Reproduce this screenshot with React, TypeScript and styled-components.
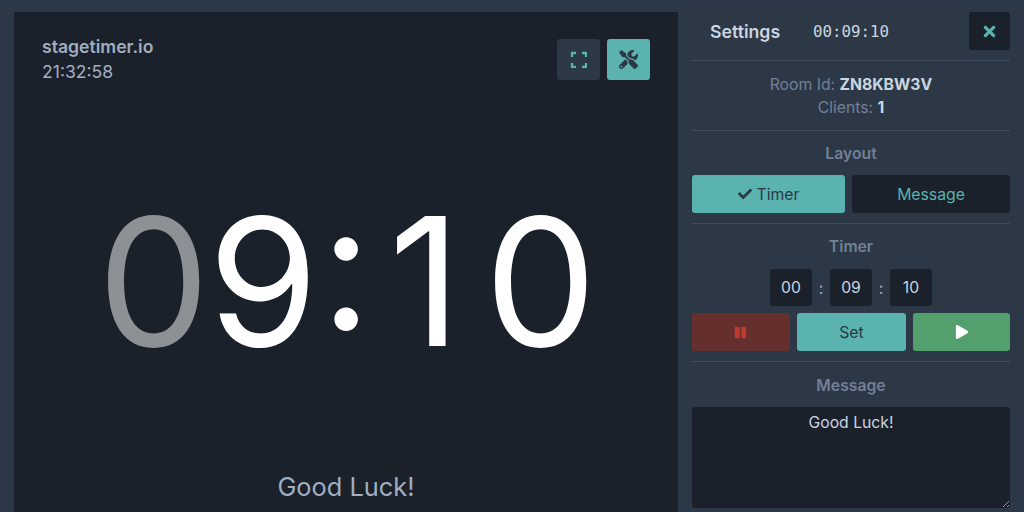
import React from 'react';
import styled, { createGlobalStyle } from 'styled-components';
import { FaCheck, FaPause, FaPlay, FaTimes, FaTools } from 'react-icons/fa';

const GlobalStyle = createGlobalStyle`
    html, body {
        margin: 0;
        height: 100%;
        overflow: hidden;
        background: #2c3846;
    }
    #root {
        height: 100%;
    }
    * {
        box-sizing: border-box;
    }
`;

const teal = '#5ab3ae';
const dark = '#1a212b';
const panel = '#2c3846';

const Page = styled.div`
    display: flex;
    height: 512px;
    padding-top: 10px;
    background: ${panel};
    border-top: 2px solid #28364a;
    font-family: Inter, "Liberation Sans", sans-serif;
`;

const Stage = styled.main`
    width: 664px;
    margin-left: 14px;
    background: ${dark};
    display: flex;
    flex-direction: column;
    flex-shrink: 0;
`;

const StageTop = styled.div`
    width: 100%;
    display: flex;
    justify-content: space-between;
    padding: 22px 28px 0;
`;

const Brand = styled.div`
    color: #a0aec0;
    font-size: 17.6px;
    line-height: 25px;
`;

const BrandName = styled.div`
    font-weight: 600;
`;

const IconButtons = styled.div`
    display: flex;
    gap: 7px;
    margin-top: 5px;
`;

const IconButton = styled.button<{ $active?: boolean }>`
    width: 43px;
    height: 41px;
    border: 0;
    border-radius: 3px;
    padding: 0;
    display: flex;
    align-items: center;
    justify-content: center;
    font-size: 19px;
    background: ${(p) => (p.$active ? teal : panel)};
    color: ${(p) => (p.$active ? panel : teal)};
`;

const Clock = styled.div`
    margin-top: 85px;
    padding-left: 83.5px;
    display: flex;
    align-items: flex-start;
    color: #fff;
    font-size: 178px;
    line-height: 225px;
    white-space: nowrap;
`;

const Digit = styled.span<{ $faded?: boolean }>`
    width: 110.5px;
    text-align: center;
    opacity: ${(p) => (p.$faded ? 0.5 : 1)};
`;

// the colon sits higher than the digits, a shorter line box lifts it
const Colon = styled.span`
    width: 51.5px;
    padding-left: 2px;
    text-align: center;
    line-height: 193px;
`;

const NarrowDigit = styled.span`
    width: 110px;
    margin-right: 4.5px;
    text-align: center;
`;

const StageMessage = styled.div`
    margin-top: 78px;
    color: #a0aec0;
    font-size: 25.4px;
    line-height: 30px;
    text-align: center;
`;

const Sidebar = styled.aside`
    flex: 1;
    padding: 0 14px;
    display: flex;
    flex-direction: column;
`;

const SettingsHead = styled.div`
    display: flex;
    align-items: center;
    height: 38px;
    padding-left: 18px;
`;

const SettingsTitle = styled.div`
    color: #cbd5e0;
    font-size: 17.7px;
    font-weight: 600;
    width: 103px;
`;

const MonoClock = styled.div`
    color: #cbd5e0;
    font-family: "DejaVu Sans Mono", "Liberation Mono", monospace;
    font-size: 15.8px;
    flex: 1;
`;

const CloseButton = styled.button`
    width: 41px;
    height: 38px;
    border: 0;
    border-radius: 3px;
    padding: 0;
    background: ${dark};
    color: ${teal};
    font-size: 17px;
    display: flex;
    align-items: center;
    justify-content: center;
`;

const Divider = styled.hr<{ $top: number }>`
    border: 0;
    border-top: 1px solid #414d5e;
    margin: ${(p) => p.$top}px 0 0;
    width: 100%;
`;

const Info = styled.div`
    margin-top: 12px;
    color: #718096;
    font-size: 15.75px;
    line-height: 23px;
    text-align: center;

    strong {
        color: #cbd5e0;
        font-weight: 700;
    }
`;

const SectionTitle = styled.div<{ $top?: number }>`
    margin-top: ${(p) => p.$top ?? 12}px;
    height: 20px;
    color: #718096;
    font-size: 15.75px;
    font-weight: 600;
    line-height: 22px;
    text-align: center;
`;

const Row = styled.div<{ $top: number }>`
    display: flex;
    gap: 7px;
    margin-top: ${(p) => p.$top}px;
`;

const Action = styled.button<{ $bg: string; $fg: string; $grow: number }>`
    flex: ${(p) => p.$grow} 1 0;
    height: 38px;
    border: 0;
    border-radius: 3px;
    padding: 0;
    display: flex;
    align-items: center;
    justify-content: center;
    gap: 5px;
    background: ${(p) => p.$bg};
    color: ${(p) => p.$fg};
    font-family: inherit;
    font-size: 15.75px;
`;

const TimeRow = styled.div`
    display: flex;
    justify-content: center;
    align-items: center;
    margin-top: 13px;
`;

const TimeInput = styled.input`
    width: 42px;
    height: 37px;
    border: 0;
    border-radius: 3px;
    padding: 0;
    background: ${dark};
    color: #cbd5e0;
    font-family: inherit;
    font-size: 15.75px;
    text-align: center;
`;

const TimeSep = styled.span`
    width: 18px;
    text-align: center;
    color: #a0aec0;
    font-size: 16px;
`;

const MessageBox = styled.textarea`
    margin-top: 12px;
    width: 100%;
    height: 101px;
    border: 0;
    border-radius: 3px;
    padding: 6px 10px;
    background: ${dark};
    color: #cbd5e0;
    font-family: inherit;
    font-size: 15.75px;
    line-height: 20px;
    text-align: center;
    resize: vertical;
    outline: 0;
`;

function FullscreenIcon() {
    return (
        <svg width="17" height="17" viewBox="0 0 17 17" fill="none" stroke={teal} strokeWidth="2.3">
            <path d="M2 6V2h4M12 2h4v4M16 12v4h-4M6 16H2v-4" />
        </svg>
    );
}

export default function App() {
    return (
        <>
            <GlobalStyle />
            <Page>
                <Stage>
                    <StageTop>
                        <Brand>
                            <BrandName>stagetimer.io</BrandName>
                            <div>21:32:58</div>
                        </Brand>
                        <IconButtons>
                            <IconButton><FullscreenIcon /></IconButton>
                            <IconButton $active><FaTools /></IconButton>
                        </IconButtons>
                    </StageTop>
                    <Clock>
                        <Digit $faded>0</Digit>
                        <Digit>9</Digit>
                        <Colon>:</Colon>
                        <NarrowDigit>1</NarrowDigit>
                        <Digit>0</Digit>
                    </Clock>
                    <StageMessage>Good Luck!</StageMessage>
                </Stage>
                <Sidebar>
                    <SettingsHead>
                        <SettingsTitle>Settings</SettingsTitle>
                        <MonoClock>00:09:10</MonoClock>
                        <CloseButton><FaTimes /></CloseButton>
                    </SettingsHead>
                    <Divider $top={10} />
                    <Info>
                        <div>Room Id: <strong>ZN8KBW3V</strong></div>
                        <div>Clients: <strong>1</strong></div>
                    </Info>
                    <Divider $top={11} />
                    <SectionTitle>Layout</SectionTitle>
                    <Row $top={12}>
                        <Action $bg={teal} $fg={panel} $grow={153}><FaCheck size={14} />Timer</Action>
                        <Action $bg={dark} $fg={teal} $grow={158}>Message</Action>
                    </Row>
                    <Divider $top={10} />
                    <SectionTitle>Timer</SectionTitle>
                    <TimeRow>
                        <TimeInput defaultValue="00" />
                        <TimeSep>:</TimeSep>
                        <TimeInput defaultValue="09" />
                        <TimeSep>:</TimeSep>
                        <TimeInput defaultValue="10" />
                    </TimeRow>
                    <Row $top={7}>
                        <Action $bg="#652f2d" $fg="#c0392f" $grow={98}><FaPause size={13} /></Action>
                        <Action $bg={teal} $fg={panel} $grow={110}>Set</Action>
                        <Action $bg="#53a06e" $fg="#fff" $grow={97}><FaPlay size={14} /></Action>
                    </Row>
                    <Divider $top={10} />
                    <SectionTitle $top={13}>Message</SectionTitle>
                    <MessageBox defaultValue="Good Luck!" />
                </Sidebar>
            </Page>
        </>
    );
}
